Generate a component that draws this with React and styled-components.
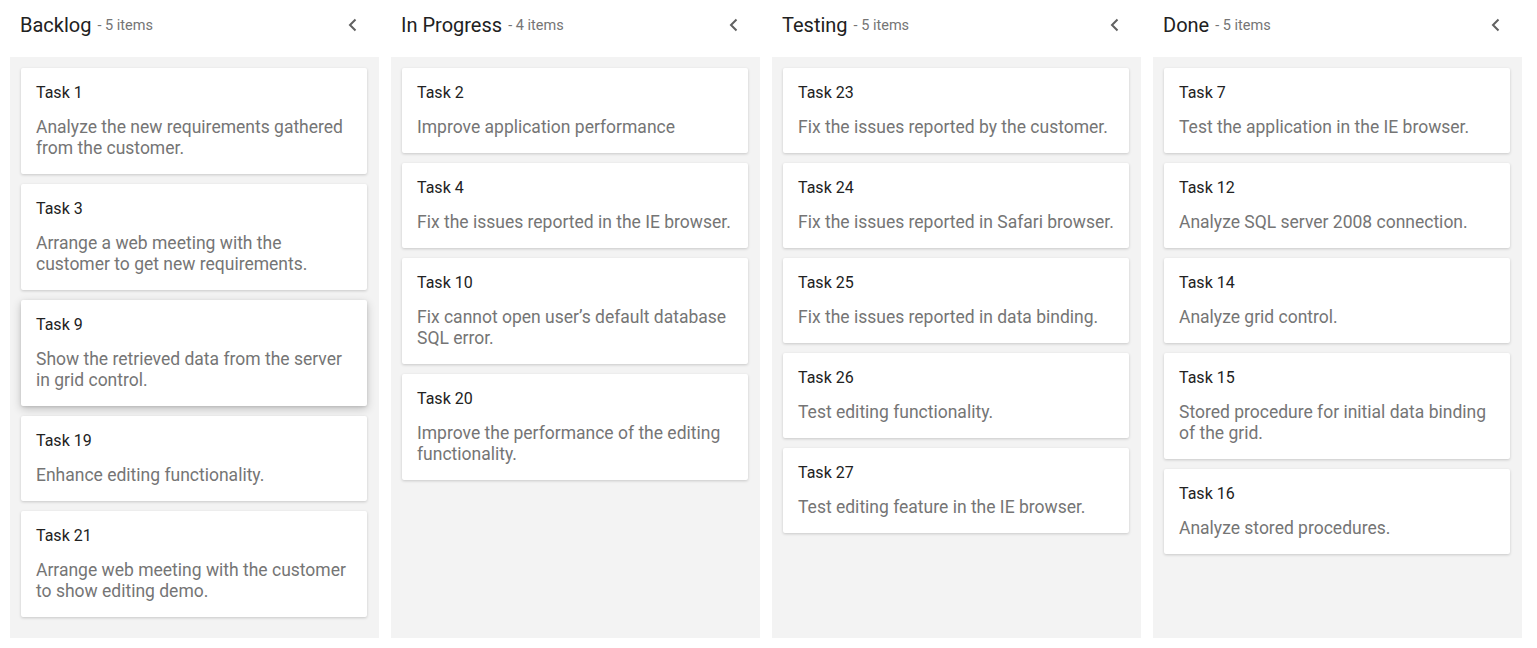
import styled, { createGlobalStyle } from "styled-components";

const columns = [
  {
    title: "Backlog",
    cards: [
      { id: "Task 1", text: "Analyze the new requirements gathered from the customer." },
      { id: "Task 3", text: "Arrange a web meeting with the customer to get new requirements." },
      { id: "Task 9", text: "Show the retrieved data from the server in grid control.", raised: true },
      { id: "Task 19", text: "Enhance editing functionality." },
      { id: "Task 21", text: "Arrange web meeting with the customer to show editing demo." },
    ],
  },
  {
    title: "In Progress",
    cards: [
      { id: "Task 2", text: "Improve application performance" },
      { id: "Task 4", text: "Fix the issues reported in the IE browser." },
      { id: "Task 10", text: "Fix cannot open user’s default database SQL error." },
      { id: "Task 20", text: "Improve the performance of the editing functionality." },
    ],
  },
  {
    title: "Testing",
    cards: [
      { id: "Task 23", text: "Fix the issues reported by the customer." },
      { id: "Task 24", text: "Fix the issues reported in Safari browser." },
      { id: "Task 25", text: "Fix the issues reported in data binding." },
      { id: "Task 26", text: "Test editing functionality." },
      { id: "Task 27", text: "Test editing feature in the IE browser." },
    ],
  },
  {
    title: "Done",
    cards: [
      { id: "Task 7", text: "Test the application in the IE browser." },
      { id: "Task 12", text: "Analyze SQL server 2008 connection." },
      { id: "Task 14", text: "Analyze grid control." },
      { id: "Task 15", text: "Stored procedure for initial data binding of the grid." },
      { id: "Task 16", text: "Analyze stored procedures." },
    ],
  },
];

const GlobalStyle = createGlobalStyle`
  html, body {
    margin: 0;
    background: #fff;
    font-family: Roboto, "Liberation Sans", sans-serif;
  }
`;

const Board = styled.div`
  display: grid;
  grid-template-columns: repeat(4, 369px);
  column-gap: 12px;
  height: 648px;
  box-sizing: border-box;
  padding: 0 15px 10px 10px;
`;

const Column = styled.section`
  display: flex;
  flex-direction: column;
  min-height: 0;
`;

const Header = styled.header`
  height: 57px;
  display: flex;
  align-items: center;
  padding: 0 20px 7px 10px;
  box-sizing: border-box;
`;

const Title = styled.h2`
  margin: 0;
  font-size: 20px;
  font-weight: 400;
  color: #212121;
  line-height: 1;
`;

const Count = styled.span`
  margin-left: 6px;
  font-size: 14.5px;
  color: #757575;
  padding-top: 1px;
`;

const Toggle = styled.button`
  margin-left: auto;
  border: 0;
  background: none;
  padding: 0;
  width: 14px;
  height: 16px;
  display: flex;
  align-items: center;
  justify-content: center;
  color: #616161;
  cursor: pointer;
`;

const Lane = styled.div`
  flex: 1;
  background: #f3f3f3;
  padding: 11px 12px 11px 11px;
  display: flex;
  flex-direction: column;
  gap: 10px;
`;

const Card = styled.article`
  background: #fff;
  border-radius: 2px;
  padding: 15px;
  box-shadow: ${(p) =>
    p.$raised
      ? "0 3px 10px rgba(0, 0, 0, 0.2), 0 1px 3px rgba(0, 0, 0, 0.12)"
      : "0 1px 3px rgba(0, 0, 0, 0.18)"};
`;

const CardTitle = styled.div`
  font-size: 16px;
  line-height: 19px;
  color: #222;
`;

const CardText = styled.div`
  margin-top: 15px;
  font-size: 17.5px;
  line-height: 21px;
  color: #757575;
`;

const Chevron = () => (
  <svg width="9" height="14" viewBox="0 0 9 14" fill="none">
    <path d="M7.5 1.5L2 7l5.5 5.5" stroke="currentColor" strokeWidth="2" />
  </svg>
);

export default function App() {
  return (
    <>
      <GlobalStyle />
      <Board>
        {columns.map((col) => (
          <Column key={col.title}>
            <Header>
              <Title>{col.title}</Title>
              <Count>- {col.cards.length} items</Count>
              <Toggle aria-label="Collapse">
                <Chevron />
              </Toggle>
            </Header>
            <Lane>
              {col.cards.map((card) => (
                <Card key={card.id} $raised={card.raised}>
                  <CardTitle>{card.id}</CardTitle>
                  <CardText>{card.text}</CardText>
                </Card>
              ))}
            </Lane>
          </Column>
        ))}
      </Board>
    </>
  );
}
